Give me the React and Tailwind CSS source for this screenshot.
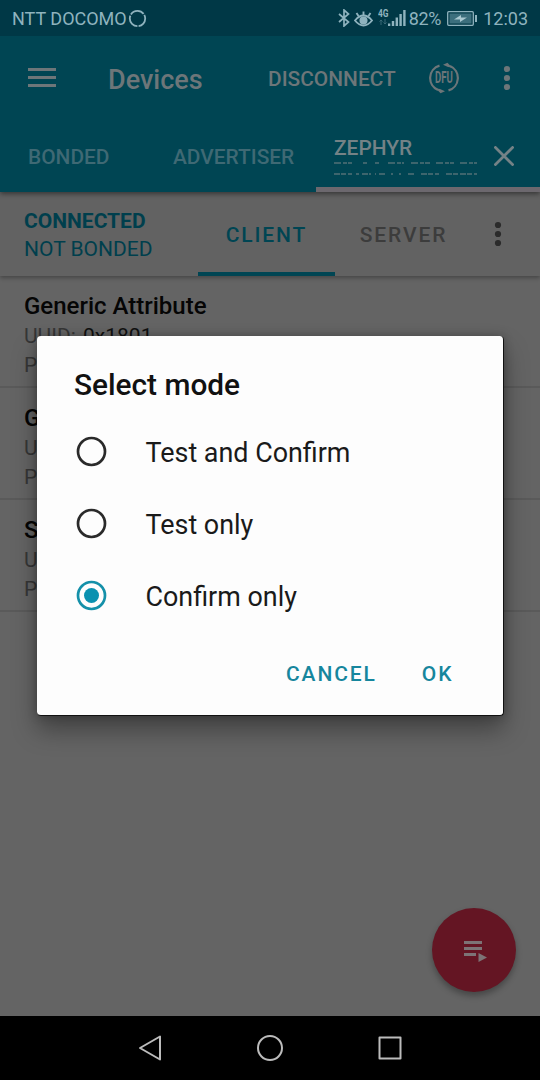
import React from "react";

const services = [
  { name: "Generic Attribute", uuid: "0x1801" },
  { name: "Generic Access", uuid: "0x1800" },
  { name: "SMP Service", uuid: "8D53DC1D" },
];

const modes = ["Test and Confirm", "Test only", "Confirm only"];

function Dots({ className }) {
  return (
    <svg className={className} width="8" height="26" viewBox="0 0 8 26" fill="currentColor">
      <circle cx="4" cy="4" r="3.1" />
      <circle cx="4" cy="13" r="3.1" />
      <circle cx="4" cy="22" r="3.1" />
    </svg>
  );
}

function StatusBar() {
  return (
    <div className="flex h-9 items-center bg-[#003846] pl-3 pr-3 text-[18px] leading-9 text-[#8fb3be]">
      <span className="pt-0.5">NTT DOCOMO</span>
      <svg className="ml-px" width="19" height="19" viewBox="0 0 19 19" fill="none" stroke="currentColor" strokeWidth="1.8">
        <circle cx="9.5" cy="9.5" r="7.7" strokeDasharray="14.9 1.2" strokeDashoffset="4" />
      </svg>
      <div className="ml-auto flex items-center">
        <svg width="12" height="18" viewBox="0 0 12 18" fill="none" stroke="currentColor" strokeWidth="1.7">
          <path d="M1 5L10.5 13L6 17V1L10.5 5L1 13" />
        </svg>
        <svg className="ml-1 mt-px" width="19" height="18" viewBox="0 0 19 18" fill="none" stroke="currentColor" strokeWidth="1.9">
          <path d="M1 10.500C4 6.800 6.800 5.500 9.500 5.500S15 6.800 18 10.500C15 14.200 12.200 15.500 9.500 15.500S4 14.200 1 10.500Z" />
          <circle cx="9.5" cy="10.5" r="3.1" fill="currentColor" />
          <path d="M9.5 5.500V1.500M4.500 6L2.500 3M14.500 6L16.500 3" />
        </svg>
        <div className="ml-[5px] flex h-[18px] w-[10px] flex-col text-[10.500px] leading-[10px] font-bold">
          <span className="origin-left scale-x-80">4G</span>
          <svg className="ml-px opacity-40" width="8" height="6" viewBox="0 0 8 6" fill="none" stroke="currentColor">
            <path d="M2 6V1M.5 2.500L2 1L3.500 2.500M6 0V5M4.500 3.500L6 5L7.500 3.500" />
          </svg>
        </div>
        <svg width="18" height="18" viewBox="0 0 18 18" fill="currentColor">
          <path d="M0 14.500h2.300V17H0zM3.800 12h2.400v5H3.800zM7.600 8.500H10V17H7.600zM11.400 5h2.400v12h-2.400zM15.200 1h2.400v16h-2.400z" />
        </svg>
        <span className="ml-[3px] pt-0.5 tracking-[-0.3px]">82%</span>
        <svg className="ml-[6px] mt-[2px]" width="31" height="16" viewBox="0 0 31 16" fill="none">
          <rect x=".7" y=".7" width="25.600" height="13.600" rx="1" stroke="currentColor" strokeWidth="1.3" />
          <rect x="2.500" y="2.500" width="22" height="10" fill="#3c6f7d" />
          <path d="M7 8.500L14 4V6.500H20L13 11V8.500Z" fill="#a9c8d0" />
          <path d="M28 4h2v7h-2z" fill="currentColor" />
        </svg>
        <span className="ml-[5px] pt-0.5 text-[18px]">12:03</span>
      </div>
    </div>
  );
}

function Header() {
  return (
    <header className="relative z-10 bg-[#004553] text-[#6d7679] shadow-[0_2px_5px_rgba(0,0,0,0.45)]">
      <StatusBar />
      <div className="flex h-[84px] items-center pl-7">
        <svg width="28" height="20" viewBox="0 0 28 20" fill="currentColor">
          <path d="M0 0h28v3H0zM0 8h28v3H0zM0 16h28v3H0z" />
        </svg>
        <h1 className="ml-[52px] w-40 pt-[4px] text-[27px] font-medium">Devices</h1>
        <span className="w-[161px] pt-1 text-[20.900px] font-medium">DISCONNECT</span>
        <div className="grid place-items-center">
          <svg className="col-start-1 row-start-1" width="30" height="32" viewBox="0 0 30 32" fill="none" stroke="currentColor" strokeWidth="2.200">
            <path d="M10.500 3.600A13 13 0 0 0 9 28M19.500 28.400A13 13 0 0 0 21 4" />
            <path d="M14 2.800L18.500 .8L23 5.500L19 5ZM16 29.200L11.500 31.200L7 26.500L11 27Z" fill="currentColor" stroke="none" />
          </svg>
          <span className="col-start-1 row-start-1 flex w-[30px] origin-center scale-x-[.6] justify-center text-[16px] leading-5 font-bold">DFU</span>
        </div>
        <Dots className="ml-[44px]" />
      </div>
      <nav className="flex h-[72px] text-[20.900px] font-medium text-[#3f6974]">
        <div className="flex w-[137px] items-center pl-7 pt-1">BONDED</div>
        <div className="flex w-[179px] items-center pl-9 pt-1">ADVERTISER</div>
        <div className="flex flex-1 items-center border-b-[5px] border-[#6c686e] pl-[18px] text-[#748286]">
          <div className="w-[144px] pt-[6px]">
            <div className="leading-6">ZEPHYR</div>
            <svg width="144" height="18" viewBox="0 0 144 18" fill="none" stroke="currentColor" strokeWidth="1.300" opacity=".7">
              <path d="M0 3h18M29 3h4M41 3h4M54 3h16M77 3h19M102 3h18M126 3h17" strokeDasharray="7 2 4 1" />
              <path d="M0 14h18M22 14h3M28 14h9M41 14h1M45 14h7M57 14h2M65 14h2M74 14h6M87 14h18M112 14h31" strokeDasharray="6 1 5 2" />
            </svg>
          </div>
          <svg className="ml-4 mt-1" width="20" height="20" viewBox="0 0 20 20" stroke="currentColor" strokeWidth="2.700">
            <path d="M.5 .5L19.500 19.500M19.500 .5L.5 19.500" />
          </svg>
        </div>
      </nav>
    </header>
  );
}

function ConnectionBar() {
  return (
    <div className="relative flex h-[84px] bg-[#626262] text-[21px] shadow-[0_2px_4px_rgba(0,0,0,0.3)]">
      <div className="w-[198px] pl-6 pt-[15px] leading-7 text-[#003f4d]">
        <div className="font-bold">CONNECTED</div>
        <div>NOT BONDED</div>
      </div>
      <div className="flex w-[137px] items-center justify-center border-b-4 border-[#004553] pt-2 font-medium tracking-[1.9px] text-[#004553]">
        CLIENT
      </div>
      <div className="flex w-[137px] items-center justify-center pt-1 font-medium tracking-[1.9px] text-[#3c3c3c]">SERVER</div>
      <Dots className="ml-[22px] mt-[29px] text-[#2b2b2b]" />
    </div>
  );
}

function ServiceRow({ name, uuid }) {
  return (
    <div className="h-28 border-b-2 border-[#5a5a5a] pl-6 pt-[14px] text-[21px] leading-[29px] text-[#363636]">
      <div className="text-[24px] leading-8 font-medium text-[#050505]">{name}</div>
      <div>
        UUID: <span className="ml-0.5 text-[#111]">{uuid}</span>
      </div>
      <div>PRIMARY SERVICE</div>
    </div>
  );
}

function ModeDialog() {
  return (
    <div className="absolute left-[37px] top-[336px] z-20 h-[380px] w-[467px] rounded-[4px] border-r border-b border-[#111] bg-[#fdfdfd] text-black shadow-[0_14px_24px_rgba(0,0,0,0.35),0_0_10px_rgba(0,0,0,0.25)]">
      <h2 className="pl-[37px] pt-[29px] text-[29.800px] leading-10 font-medium text-[#111]">Select mode</h2>
      <div className="mt-2.5 flex flex-col">
        {modes.map((mode, i) => (
          <label key={mode} className="flex h-[72px] items-center pl-[39px] text-[26.900px] text-[#1a1a1a]">
            <svg width="31" height="31" viewBox="0 0 31 31" fill="none" stroke={i === 2 ? "#1490a9" : "#2a2a2a"} strokeWidth="2.700">
              <circle cx="15.500" cy="15.500" r="13.500" />
              {i === 2 && <circle cx="15.500" cy="15.500" r="7.500" fill="#0a91b0" stroke="none" />}
            </svg>
            <span className="ml-[38.500px] pt-[5px]">{mode}</span>
          </label>
        ))}
      </div>
      <div className="flex h-[84px] items-center pl-[249px] pt-[4px] text-[21px] font-medium tracking-[1.9px] text-[#16869d]">
        <span>CANCEL</span>
        <span className="ml-[45px]">OK</span>
      </div>
    </div>
  );
}

export default function App() {
  return (
    <div className="relative flex h-[1080px] w-[540px] flex-col overflow-hidden bg-[#646464] font-[Roboto,sans-serif]">
      <Header />
      <ConnectionBar />
      <main className="flex-1">
        {services.map((s) => (
          <ServiceRow key={s.name} {...s} />
        ))}
      </main>
      <ModeDialog />
      <button className="absolute bottom-[88px] right-6 flex h-[84px] w-[84px] items-center justify-center rounded-full bg-[#641523] text-[#7d7376] shadow-[0_4px_6px_rgba(0,0,0,0.3)]">
        <svg width="26" height="26" viewBox="0 0 26 26" fill="currentColor">
          <path d="M3 4h18v3H3zM3 10h18v3H3zM3 16h12v3H3zM17.500 16L26 20.500L17.500 25Z" />
        </svg>
      </button>
      <footer className="flex h-16 items-center bg-black pl-[138px]">
        <svg width="264" height="28" viewBox="0 0 264 28" fill="none" stroke="#bcbcbc" strokeWidth="2" strokeLinejoin="round">
          <path d="M22 2.500V25.500L2 14Z" />
          <circle cx="132" cy="14" r="12" />
          <rect x="241.500" y="3.500" width="21" height="21" />
        </svg>
      </footer>
    </div>
  );
}
